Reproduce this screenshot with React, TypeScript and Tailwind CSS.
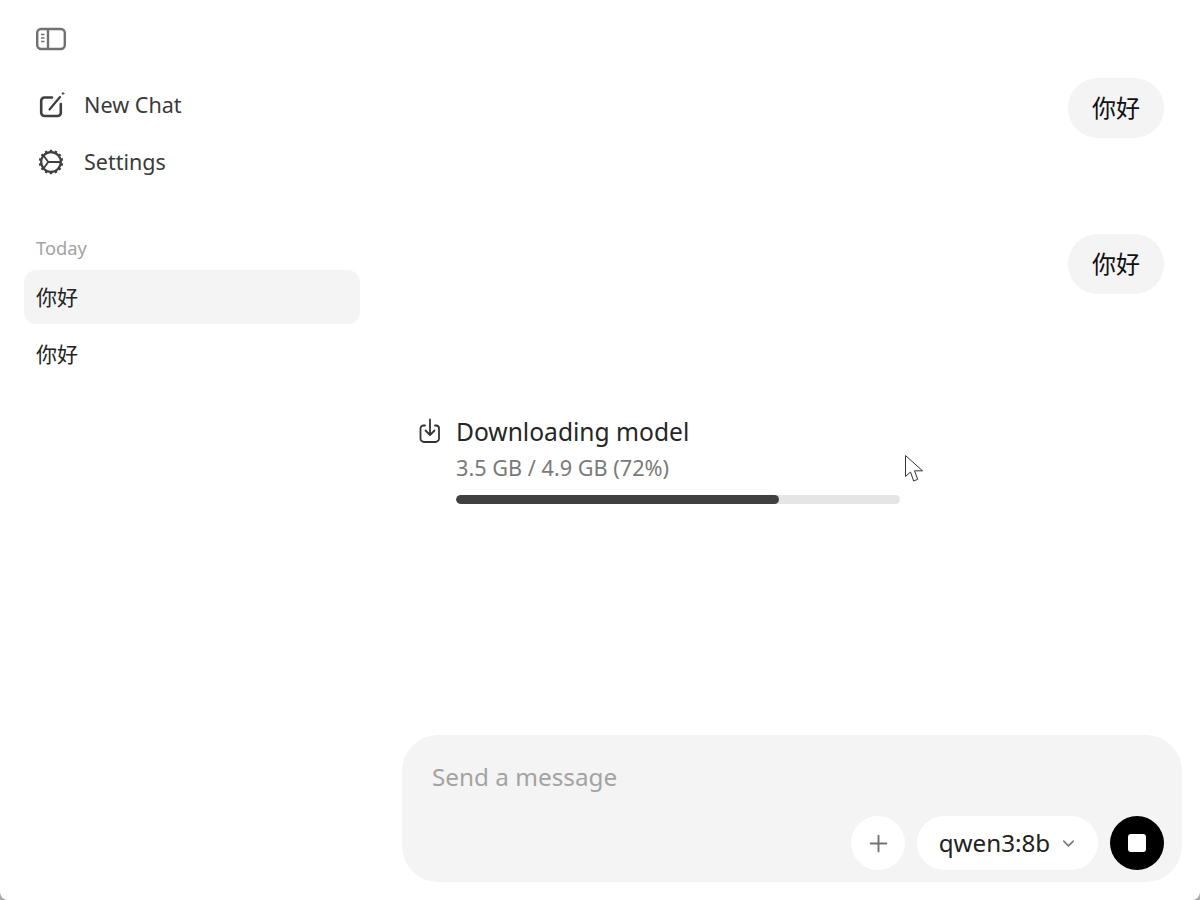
import { ChevronDown, Plus } from 'lucide-react'

const font = "font-['Noto_Sans','Noto_Sans_CJK_SC',sans-serif]"

function SidebarToggleIcon() {
  return (
    <svg width="30" height="24" viewBox="0 0 30 24" fill="none" stroke="#707070" className="block">
      <rect x="1.200" y="2" width="27.600" height="20" rx="4" strokeWidth="2.400" />
      <path d="M12 2v20" strokeWidth="2.400" />
      <path d="M5 7.500h3.500M5 11h3.500M5 14.500h3.500" strokeWidth="1.600" />
    </svg>
  )
}

function NewChatIcon() {
  return (
    <svg width="28" height="28" viewBox="0 0 28 28" fill="none" stroke="#3f3f3f" strokeWidth="2.600" strokeLinecap="round" className="block">
      <path d="M15 6.500H7.500a3.300 3.300 0 0 0-3.300 3.300v12A3.300 3.300 0 0 0 7.500 25h13a3.300 3.300 0 0 0 3.300-3.300V13" />
      <path d="M12.500 18.500 23 6" strokeWidth="2.200" />
      <circle cx="26" cy="2.500" r="0.800" fill="#3f3f3f" strokeWidth="1" />
    </svg>
  )
}

function GearIcon() {
  const teeth = Array.from({ length: 14 }, (_, i) => (i * 360) / 14)
  return (
    <svg width="26" height="26" viewBox="0 0 26 26" fill="none" stroke="#3f3f3f" className="block">
      <circle cx="13" cy="13" r="9.800" strokeWidth="2.200" />
      <path d="M10.300 13H22M10.300 13 5.500 6.500M10.300 13 5.500 19.500" strokeWidth="1.800" />
      {teeth.map((deg) => (
        <path key={deg} d="M13 .8v2.400" strokeWidth="2.400" transform={`rotate(${deg} 13 13)`} />
      ))}
    </svg>
  )
}

function DownloadIcon() {
  return (
    <svg width="24" height="26" viewBox="0 0 24 26" fill="none" stroke="#333" strokeWidth="1.800" strokeLinecap="round" strokeLinejoin="round" className="block">
      <path d="M7 7.500H5.500a3 3 0 0 0-3 3v10a3.500 3.500 0 0 0 3.500 3.500h11.500a3.500 3.500 0 0 0 3.500-3.500v-10a3 3 0 0 0-3-3H17" />
      <path d="M12 1.500v15M7.500 12.500l4.500 4.500 4.500-4.500" />
    </svg>
  )
}

function Cursor() {
  return (
    <svg width="20" height="30" viewBox="0 0 20 30" className="absolute left-[904px] top-[454px]" fill="#fff" stroke="#333" strokeWidth="1">
      <path d="M1.500 1.500V22.500L6.500 18l3.200 9 4-1.700-3.200-8.500h8z" />
    </svg>
  )
}

function UserBubble() {
  return (
    <div className="flex h-[60px] w-[96px] items-center justify-center rounded-full bg-[#f4f4f4] text-[24px] text-[#111]">
      你好
    </div>
  )
}

export default function App() {
  return (
    <div className={`${font} relative h-[900px] w-[1200px] overflow-hidden bg-[#a8a8a8]`}>
      <div className="flex h-full rounded-b-[8px] bg-white">
        <aside className="flex w-[384px] shrink-0 flex-col px-6">
          <div className="mt-[27px] pl-3">
            <SidebarToggleIcon />
          </div>
          <nav className="mt-[39px] flex flex-col gap-[27px] text-[#3a3a3a]">
            <div className="flex h-[30px] items-center gap-[19px] pl-[13px] text-[21.600px]">
              <NewChatIcon />
              <span>New Chat</span>
            </div>
            <div className="flex h-[30px] items-center gap-5 pl-[14px] text-[21.500px]">
              <GearIcon />
              <span>Settings</span>
            </div>
          </nav>
          <div className="mt-[57px] pl-3 text-[18.300px] leading-[28px] text-[#a3a3a3]">Today</div>
          <div className="mt-2 flex flex-col gap-[3px] text-[21px] text-[#222]">
            <div className="flex h-[54px] items-center rounded-[12px] bg-[#f4f4f4] px-3 pt-[2px]">你好</div>
            <div className="flex h-[54px] items-center px-3 pt-[2px]">你好</div>
          </div>
        </aside>

        <main className="flex min-w-0 flex-1 flex-col">
          <div className="flex flex-1 flex-col pt-[78px] pr-9">
            <div className="flex flex-col items-end gap-24">
              <UserBubble />
              <UserBubble />
            </div>
            <div className="mt-[120px] flex gap-[14px] pl-[34px]">
              <div className="pt-1">
                <DownloadIcon />
              </div>
              <div className="w-[444px]">
                <div className="text-[24.600px] leading-[36px] text-[#262626]">Downloading model</div>
                <div className="mt-[3px] text-[21.700px] leading-[30px] text-[#7a7a7a]">3.5 GB / 4.9 GB (72%)</div>
                <div className="mt-[12px] h-[9px] overflow-hidden rounded-full bg-[#e5e5e5]">
                  <div className="h-full w-[323px] rounded-full bg-[#404040]" />
                </div>
              </div>
            </div>
          </div>

          <div className="mb-[18px] ml-[18px] mr-[18px] flex h-[147px] flex-col rounded-[36px] bg-[#f4f4f4] pb-3 pl-[30px] pr-[18px] pt-[24px]">
            <div className="text-[24.300px] leading-[36px] text-[#a3a3a3]">Send a message</div>
            <div className="mt-auto flex items-center justify-end gap-3">
              <div className="flex h-[54px] w-[54px] items-center justify-center rounded-full bg-white text-[#737373]">
                <Plus size={27} strokeWidth={1.700} />
              </div>
              <div className="flex h-[54px] w-[181px] items-center justify-center gap-[9px] rounded-full bg-white pl-[2px] text-[24.200px] text-[#222]">
                <span>qwen3:8b</span>
                <ChevronDown size={19} strokeWidth={1.800} className="text-[#737373]" />
              </div>
              <div className="flex h-[54px] w-[54px] items-center justify-center rounded-full bg-black">
                <div className="h-[18px] w-[18px] rounded-[3px] bg-white" />
              </div>
            </div>
          </div>
        </main>
      </div>
      <Cursor />
    </div>
  )
}
